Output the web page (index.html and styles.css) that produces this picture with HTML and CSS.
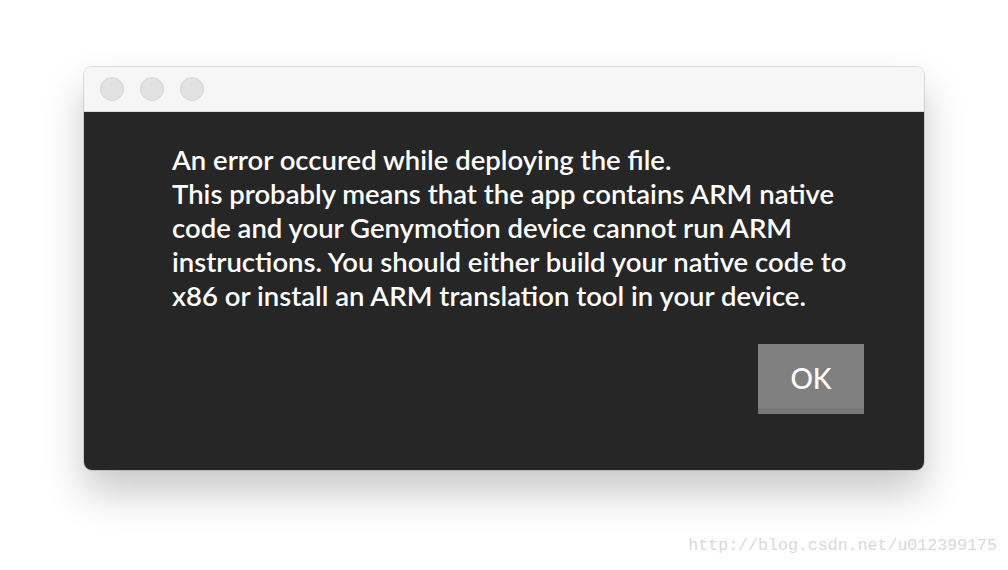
FILE: index.html
```html
<!DOCTYPE html>
<html lang="en">
<head>
    <meta charset="UTF-8">
    <meta name="viewport" content="width=device-width, initial-scale=1.0">
    <title>Genymotion - Error</title>
    <link rel="stylesheet" href="styles.css">
</head>
<body>
    <div class="window">
        <div class="title-bar">
            <span class="dot"></span>
            <span class="dot"></span>
            <span class="dot"></span>
        </div>
        <div class="dialog">
            <p class="message">An error occured while deploying the file.<br>This probably means that the app contains ARM native code and your Genymotion device cannot run ARM instructions. You should either build your native code to x86 or install an ARM translation tool in your device.</p>
            <div class="actions">
                <button class="ok-button">OK</button>
            </div>
        </div>
    </div>
    <div class="watermark">http://blog.csdn.net/u012399175</div>
</body>
</html>
```

FILE: styles.css
```css
body {
    margin: 0;
    background: #ffffff;
    font-family: Lato, "Open Sans", sans-serif;
    width: 1008px;
    height: 570px;
    overflow: hidden;
}

.window {
    width: 840px;
    margin: 67px 0 0 84px;
    border-radius: 8px;
    overflow: hidden;
    box-shadow: 0 22px 40px rgba(0, 0, 0, 0.22), 0 0 0 1px rgba(0, 0, 0, 0.12);
}

.title-bar {
    height: 44px;
    background: #f6f6f6;
    border-bottom: 1px solid #dcdcdc;
    display: flex;
    align-items: center;
    gap: 16px;
    padding-left: 16px;
}

.dot {
    width: 22px;
    height: 22px;
    border-radius: 50%;
    background: #e2e2e2;
    border: 1px solid #d6d6d6;
}

.dialog {
    background: #262626;
    height: 358px;
    padding: 0 60px 0 88px;
    display: flex;
    flex-direction: column;
}

.message {
    margin: 31px 0 0;
    color: #ffffff;
    font-size: 27.5px;
    font-weight: 600;
    line-height: 34px;
    max-width: 700px;
}

.actions {
    display: flex;
    justify-content: flex-end;
    margin-top: 31px;
}

.ok-button {
    width: 106px;
    height: 70px;
    border: none;
    background: #808080;
    box-shadow: inset 0 -6px 0 #777777;
    color: #ffffff;
    font-family: Lato, sans-serif;
    font-size: 28px;
    font-weight: 500;
    padding: 0 0 2px;
}

.watermark {
    text-align: right;
    margin: 66px 11px 0 0;
    font-family: "Liberation Mono", monospace;
    font-size: 16.6px;
    color: #d9d9d9;
}
```
